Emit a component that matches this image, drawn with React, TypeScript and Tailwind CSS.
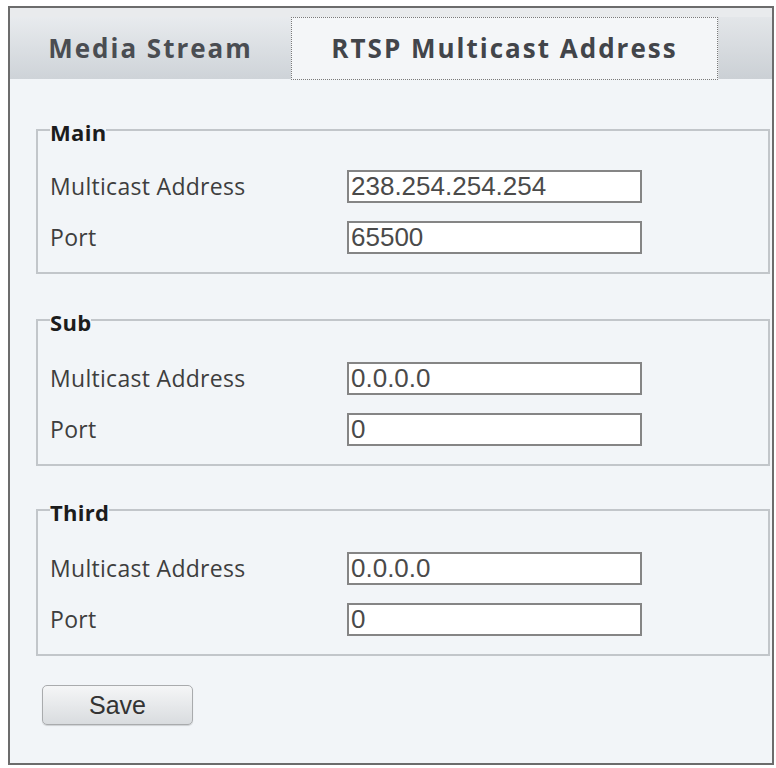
import { useState } from "react";

const LABEL_FONT = { fontFamily: '"Open Sans", "Noto Sans", sans-serif' };

interface IStreamGroup {
  name: string;
  address: string;
  port: string;
  spacing: string;
}

const GROUPS: IStreamGroup[] = [
  { name: "Main", address: "238.254.254.254", port: "65500", spacing: "mt-[36px] pt-[25px]" },
  { name: "Sub", address: "0.0.0.0", port: "0", spacing: "mt-[31px] pt-[27px]" },
  { name: "Third", address: "0.0.0.0", port: "0", spacing: "mt-[29px] pt-[27px]" },
];

const Field = ({ label, value }: { label: string; value: string }) => {
  const [text, setText] = useState(value);
  return (
    <div className="flex items-center h-[33px]">
      <span className="w-[297px] shrink-0 text-[23px] tracking-[0.3px] text-[#3e3e3e] leading-none font-['Open_Sans',sans-serif]">
        {label}
      </span>
      <input
        className="w-[295px] h-[33px] border-2 border-[#858585] bg-white pl-[2px] text-[26px] leading-none text-[#4a4a4a] font-['Liberation_Sans',Arial,sans-serif] outline-none"
        value={text}
        onChange={e => setText(e.target.value)}
      />
    </div>
  );
};

const Group = ({ group }: { group: IStreamGroup }) => (
  <fieldset
    className={`ml-[26px] mr-[2px] border-2 border-[#c2c6ca] pl-[12px] pb-[18px] flex flex-col gap-[18px] ${group.spacing}`}
  >
    <legend
      className="text-[22px] font-bold tracking-[0.3px] text-[#1c1c1c] leading-[25px] pt-[5px] px-0"
      style={LABEL_FONT}
    >
      {group.name}
    </legend>
    <Field label="Multicast Address" value={group.address} />
    <Field label="Port" value={group.port} />
  </fieldset>
);

export default function App() {
  const [tab, setTab] = useState(1);
  const tabs = ["Media Stream", "RTSP Multicast Address"];

  return (
    <div className="w-[776px] h-[768px] bg-white pt-[6px] pl-[8px]">
      <div className="w-[766px] h-[759px] border-2 border-[#6c6c6c] bg-[#f2f5f8] flex flex-col">
        <div className="h-[71px] shrink-0 bg-[#e9ebed] pt-[9px] flex items-start">
          {tabs.map((t, i) =>
            tab === i ? (
              <button
                key={t}
                className="w-[427px] h-[63px] shrink-0 border border-dotted border-[#7a7a7a] bg-[#f4f6f8] text-[26px] font-bold tracking-[2px] text-[#42454a] cursor-pointer"
                style={LABEL_FONT}
                onClick={() => setTab(i)}
              >
                {t}
              </button>
            ) : (
              <button
                key={t}
                className={`${
                  i === 0 ? "w-[281px]" : "w-[427px]"
                } h-[62px] shrink-0 bg-gradient-to-b from-[#e8ebee] to-[#ced3d8] text-[26px] font-bold tracking-[2px] text-[#4a4d52] cursor-pointer`}
                style={LABEL_FONT}
                onClick={() => setTab(i)}
              >
                {t}
              </button>
            )
          )}
          <div className="flex-1 h-[62px] bg-gradient-to-b from-[#e3e6e9] to-[#cbd0d5] border-l border-[#d8dbde]" />
        </div>

        {GROUPS.map(g => (
          <Group key={g.name} group={g} />
        ))}

        <div className="mt-[29px] ml-[32px]">
          <button className="w-[151px] h-[40px] rounded-[5px] border border-[#a9abad] bg-gradient-to-b from-[#f5f6f7] to-[#d9dcdf] text-[25px] leading-none text-[#333] font-['Liberation_Sans',Arial,sans-serif] shadow-[0_1px_1px_rgba(0,0,0,0.15)] cursor-pointer">
            Save
          </button>
        </div>
      </div>
    </div>
  );
}
